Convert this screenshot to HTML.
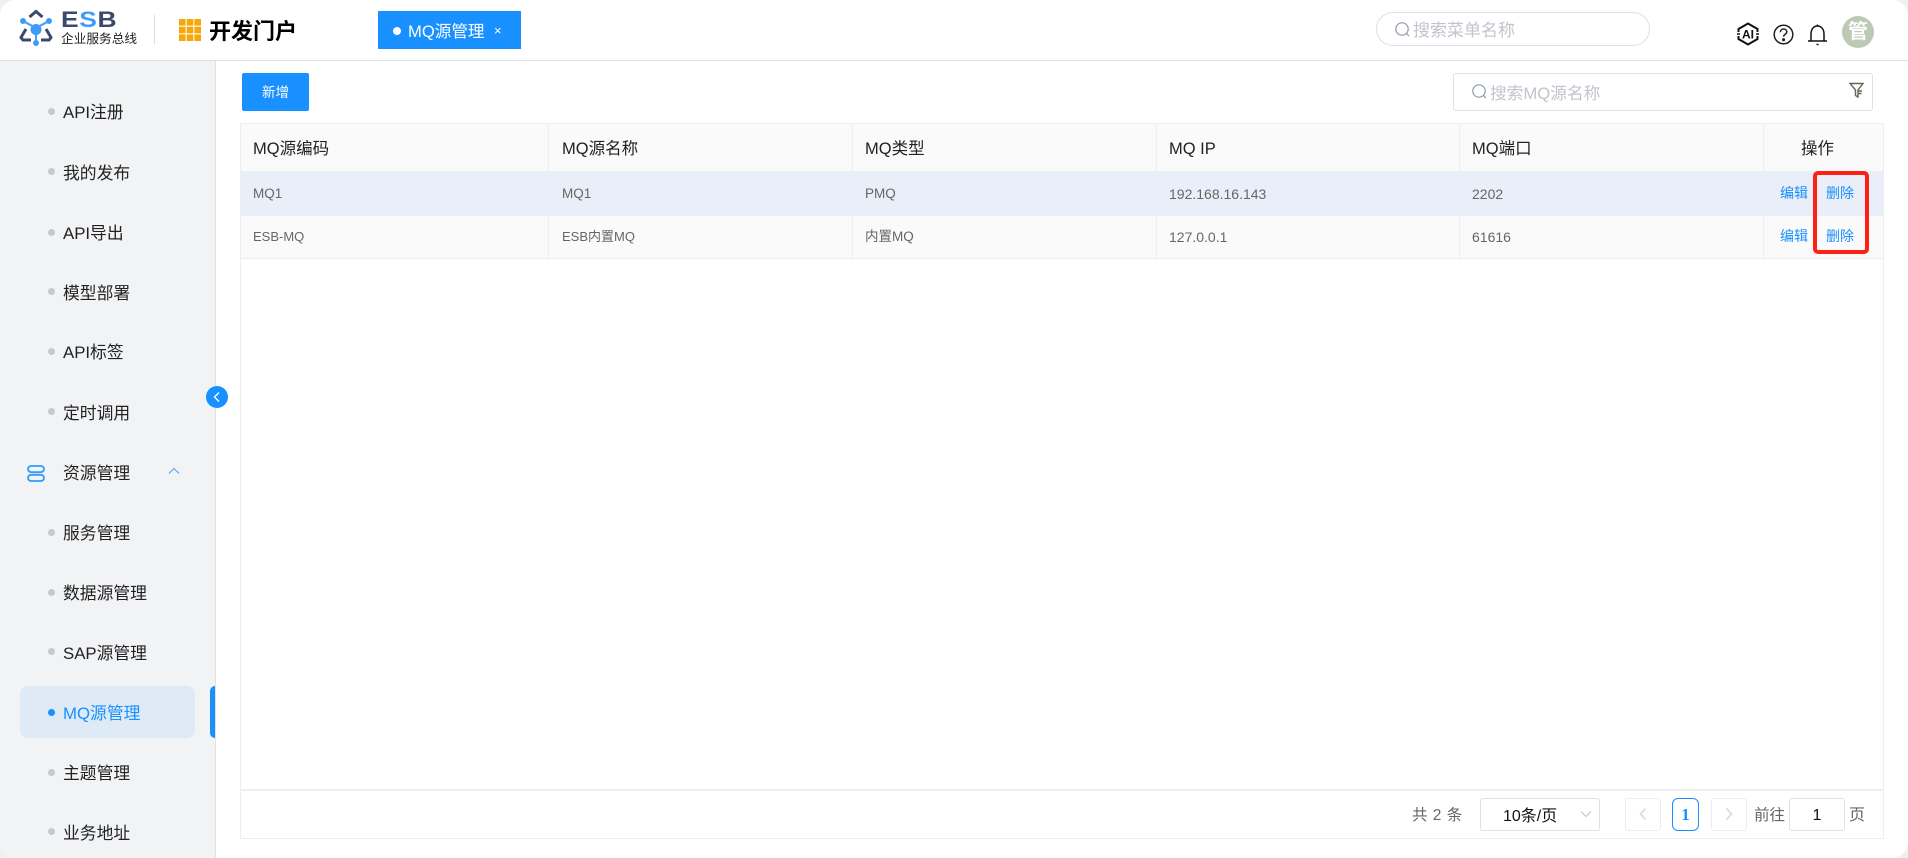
<!DOCTYPE html>
<html lang="zh-CN"><head><meta charset="utf-8"><title>MQ源管理</title>
<style>
*{box-sizing:border-box}
html,body{margin:0;padding:0;width:1908px;height:858px;overflow:hidden;background:#f0f0f0}
body{font-family:"Liberation Sans","Noto Sans CJK SC",sans-serif;color:#222}
#app{position:absolute;left:0;top:0;width:1908px;height:858px;background:#fff;border-radius:16px;overflow:hidden}
.a{position:absolute;white-space:nowrap}
.head{left:0;top:0;width:1908px;height:61px;background:#fff;border-bottom:1px solid #dfdfdf}
.side{left:0;top:61px;width:216px;height:797px;background:#f2f3f5;border-right:1px solid #e2e2e2}
.mi{font-size:16.8px;line-height:24px;color:#222;left:63px;margin-top:1px}
.dot{left:48px;width:7px;height:7px;border-radius:50%;background:#c8c8c8}
.th{font-size:16.5px;line-height:24px;color:#222;top:137px}
.td{font-size:13.5px;line-height:20px;color:#666}
.n{font-size:14px}
.lk{font-size:14px;line-height:18px;color:#1890ff}
.vl{width:1px;background:#eceef4}
.box{border:1px solid #dfe1e6;border-radius:3px;background:#fff}
</style></head><body>
<div id="app">
<div class="a head"></div>

<!-- logo -->
<svg class="a" style="left:18px;top:9px" width="40" height="40" viewBox="0 0 40 40" fill="none">
<path d="M11.5 8 L18 2.5 L24.5 8" stroke="#3a4a6b" stroke-width="3"/>
<path d="M8 20 L3 28.5 L5 31 H13" stroke="#3a4a6b" stroke-width="3"/>
<path d="M28 20 L33 28.5 L31 31 H23" stroke="#3a4a6b" stroke-width="3"/>
<path d="M5 12 L18 19 L31 12 M18 19 V34" stroke="#4aa3f5" stroke-width="2.2"/>
<circle cx="5" cy="12" r="3" fill="#3f9cf6"/><circle cx="31" cy="12" r="3" fill="#3f9cf6"/>
<circle cx="18" cy="34" r="3" fill="#3f9cf6"/><circle cx="18" cy="20.5" r="5.5" fill="#3f9cf6"/>
</svg>
<div class="a" style="left:61px;top:7px;font-size:22px;line-height:26px;font-weight:bold;color:#3a4a6b;letter-spacing:.5px;transform:scaleX(1.2);transform-origin:0 50%">E<span style="color:#3f9cf6">S</span>B</div>
<div class="a" style="left:61px;top:31px;font-size:12.7px;line-height:16px;color:#222">企业服务总线</div>
<div class="a" style="left:154px;top:15px;width:1px;height:29px;background:#dcdcdc"></div>
<svg class="a" style="left:179px;top:19px" width="22" height="22" viewBox="0 0 22 22" fill="#f5a80a">
<rect x="0" y="0" width="6.6" height="6.6"/><rect x="7.7" y="0" width="6.6" height="6.6"/><rect x="15.4" y="0" width="6.6" height="6.6"/>
<rect x="0" y="7.7" width="6.6" height="6.6"/><rect x="7.7" y="7.7" width="6.6" height="6.6"/><rect x="15.4" y="7.7" width="6.6" height="6.6"/>
<rect x="0" y="15.4" width="6.6" height="6.6"/><rect x="7.7" y="15.4" width="6.6" height="6.6"/><rect x="15.4" y="15.4" width="6.6" height="6.6"/>
</svg>
<div class="a" style="left:209px;top:17px;font-size:22px;line-height:30px;font-weight:bold;color:#000">开发门户</div>

<!-- tab -->
<div class="a" style="left:378px;top:11px;width:143px;height:38px;background:#1890ff"></div>
<div class="a" style="left:393px;top:27px;width:8px;height:8px;border-radius:50%;background:#fff"></div>
<div class="a" style="left:408px;top:20px;font-size:16.6px;line-height:24px;color:#fff">MQ源管理</div>
<div class="a" style="left:494px;top:21px;font-size:13px;line-height:20px;color:#fff">×</div>

<!-- top search -->
<div class="a" style="left:1376px;top:12px;width:274px;height:34px;border:1px solid #dcdfe6;border-radius:17px;background:#fff"></div>
<svg class="a" style="left:1394px;top:21px" width="17" height="17" viewBox="0 0 17 17" fill="none" stroke="#8f98a8" stroke-width="1.2"><circle cx="8" cy="8" r="6.2"/><path d="M12.5 12.5 L15 15"/></svg>
<div class="a" style="left:1413px;top:19px;font-size:17px;line-height:24px;color:#c0c4cc">搜索菜单名称</div>

<!-- header icons -->
<svg class="a" style="left:1737px;top:22px" width="22" height="24" viewBox="0 0 22 24" fill="none" stroke="#111" stroke-width="2"><path d="M1.5 10 V7 L11 1.5 L20.5 7 V10 M1.5 14 V17 L11 22.5 L20.5 17 V14"/><path d="M0 12 H3 M19 12 H22" stroke-width="1.4"/><text x="11" y="16.5" text-anchor="middle" font-family="Liberation Sans" font-weight="bold" font-size="12" fill="#111" stroke="none">AI</text></svg>
<svg class="a" style="left:1773px;top:24px" width="22" height="22" viewBox="0 0 22 22" fill="none" stroke="#222" stroke-width="1.5"><circle cx="10.5" cy="10.5" r="9.3"/><path d="M7.4 8.2 C7.4 6 9 5 10.6 5 C12.4 5 13.8 6.2 13.8 7.9 C13.8 10.2 10.6 10.2 10.6 12.8"/><circle cx="10.6" cy="15.7" r=".8" fill="#222"/></svg>
<svg class="a" style="left:1808px;top:24px" width="20" height="22" viewBox="0 0 20 22" fill="none" stroke="#111" stroke-width="1.5"><path d="M0 17 H19"/><path d="M3 17 V10 C3 5.5 5.5 2 9.5 2 C13.5 2 16 5.5 16 10 V17"/><path d="M9.5 0.5 V2" /><path d="M8.5 20.5 H10.5" stroke-width="1.6"/></svg>
<div class="a" style="left:1842px;top:16px;width:32px;height:32px;border-radius:50%;background:#bccab5;color:#fff;font-size:20px;line-height:32px;text-align:center;font-weight:bold">管</div>

<!-- sidebar -->
<div class="a side"></div>
<div class="a dot" style="top:108px"></div><div class="a mi" style="top:100px">API注册</div>
<div class="a dot" style="top:168px"></div><div class="a mi" style="top:161px">我的发布</div>
<div class="a dot" style="top:229px"></div><div class="a mi" style="top:221px">API导出</div>
<div class="a dot" style="top:288px"></div><div class="a mi" style="top:281px">模型部署</div>
<div class="a dot" style="top:348px"></div><div class="a mi" style="top:340px">API标签</div>
<div class="a dot" style="top:408px"></div><div class="a mi" style="top:401px">定时调用</div>
<svg class="a" style="left:27px;top:465px" width="18" height="17" viewBox="0 0 18 17" fill="none" stroke="#2f9bff" stroke-width="1.8"><rect x="1" y="1" width="16" height="6.2" rx="3.1"/><rect x="1" y="9.8" width="16" height="6.2" rx="3.1"/></svg>
<div class="a mi" style="top:461px">资源管理</div>
<svg class="a" style="left:168px;top:467px" width="12" height="8" viewBox="0 0 12 8" fill="none" stroke="#4aa3f5" stroke-width="1"><path d="M1 6.5 L6 1.5 L11 6.5"/></svg>
<div class="a dot" style="top:529px"></div><div class="a mi" style="top:521px">服务管理</div>
<div class="a dot" style="top:589px"></div><div class="a mi" style="top:581px">数据源管理</div>
<div class="a dot" style="top:648px"></div><div class="a mi" style="top:641px">SAP源管理</div>
<div class="a" style="left:20px;top:686px;width:175px;height:52px;background:#deeaf6;border-radius:8px"></div>
<div class="a" style="left:210px;top:686px;width:5px;height:52px;background:#1890ff;border-radius:5px 0 0 5px"></div>
<div class="a dot" style="top:709px;background:#1890ff"></div><div class="a mi" style="top:701px;color:#1890ff">MQ源管理</div>
<div class="a dot" style="top:769px"></div><div class="a mi" style="top:761px">主题管理</div>
<div class="a dot" style="top:828px"></div><div class="a mi" style="top:821px">业务地址</div>
<div class="a" style="left:206px;top:386px;width:22px;height:22px;border-radius:50%;background:#1890ff"></div>
<svg class="a" style="left:206px;top:386px" width="22" height="22" viewBox="0 0 22 22" fill="none" stroke="#fff" stroke-width="1.4"><path d="M13 6.5 L8.5 11 L13 15.5"/></svg>

<!-- toolbar -->
<div class="a" style="left:242px;top:73px;width:67px;height:38px;background:#1890ff;border-radius:2px;color:#fff;font-size:13.5px;line-height:39px;text-align:center">新增</div>
<div class="a box" style="left:1453px;top:73px;width:420px;height:38px"></div>
<svg class="a" style="left:1471px;top:83px" width="17" height="17" viewBox="0 0 17 17" fill="none" stroke="#8f98a8" stroke-width="1.2"><circle cx="8" cy="8" r="6.2"/><path d="M12.5 12.5 L15 15"/></svg>
<div class="a" style="left:1490px;top:82px;font-size:16.7px;line-height:24px;color:#c0c4cc">搜索MQ源名称</div>
<svg class="a" style="left:1849px;top:82px" width="15" height="17" viewBox="0 0 15 17" fill="none" stroke="#6a6257" stroke-width="1.4"><path d="M1 1.5 H14 L9 8 V15 L6.5 13.5 V8 Z"/><path d="M9.5 9 H13 M9.5 11.5 H12.5"/></svg>

<!-- table -->
<div class="a" style="left:240px;top:123px;width:1644px;height:716px;border:1px solid #eceef4;background:#fff"></div>
<div class="a" style="left:241px;top:124px;width:1642px;height:47px;background:#fafafa"></div>
<div class="a" style="left:241px;top:171px;width:1642px;height:45px;background:#e9eef8"></div>
<div class="a" style="left:241px;top:216px;width:1642px;height:42px;background:#fafafa"></div>
<div class="a" style="left:241px;top:258px;width:1642px;height:1px;background:#eceef4"></div>
<div class="a vl" style="left:548px;top:124px;height:47px"></div><div class="a vl" style="left:548px;top:216px;height:42px"></div>
<div class="a vl" style="left:852px;top:124px;height:47px"></div><div class="a vl" style="left:852px;top:216px;height:42px"></div>
<div class="a vl" style="left:1156px;top:124px;height:47px"></div><div class="a vl" style="left:1156px;top:216px;height:42px"></div>
<div class="a vl" style="left:1459px;top:124px;height:47px"></div><div class="a vl" style="left:1459px;top:216px;height:42px"></div>
<div class="a vl" style="left:1763px;top:124px;height:47px"></div><div class="a vl" style="left:1763px;top:216px;height:42px"></div>

<div class="a th" style="left:253px">MQ源编码</div>
<div class="a th" style="left:562px">MQ源名称</div>
<div class="a th" style="left:865px">MQ类型</div>
<div class="a th" style="left:1169px">MQ IP</div>
<div class="a th" style="left:1472px">MQ端口</div>
<div class="a th" style="left:1801px">操作</div>

<div class="a td" style="left:253px;top:184px">MQ1</div>
<div class="a td" style="left:562px;top:184px">MQ1</div>
<div class="a td" style="left:865px;top:184px">PMQ</div>
<div class="a td n" style="left:1169px;top:184px">192.168.16.143</div>
<div class="a td n" style="left:1472px;top:184px">2202</div>
<div class="a lk" style="left:1780px;top:184px">编辑</div>
<div class="a lk" style="left:1826px;top:184px">删除</div>

<div class="a td" style="left:253px;top:227px;font-size:13px">ESB-MQ</div>
<div class="a td" style="left:562px;top:227px;font-size:13px">ESB内置MQ</div>
<div class="a td" style="left:865px;top:227px">内置MQ</div>
<div class="a td n" style="left:1169px;top:227px">127.0.0.1</div>
<div class="a td n" style="left:1472px;top:227px">61616</div>
<div class="a lk" style="left:1780px;top:227px">编辑</div>
<div class="a lk" style="left:1826px;top:227px">删除</div>

<div class="a" style="left:1813px;top:171px;width:56px;height:83px;border:4px solid #ff2015;border-radius:5px"></div>

<!-- footer -->
<div class="a" style="left:241px;top:789px;width:1642px;height:2px;background:#eceef4"></div>
<div class="a" style="left:1412px;top:805px;font-size:15.5px;line-height:22px;color:#666;word-spacing:1px">共 2 条</div>
<div class="a box" style="left:1480px;top:798px;width:120px;height:33px"></div>
<div class="a" style="left:1503px;top:805px;font-size:16px;line-height:24px;color:#111">10条/页</div>
<svg class="a" style="left:1580px;top:810px" width="12" height="8" viewBox="0 0 12 8" fill="none" stroke="#c0c4cc" stroke-width="1.1"><path d="M1 1.5 L6 6.5 L11 1.5"/></svg>
<div class="a box" style="left:1625px;top:798px;width:36px;height:33px;border-color:#ebedf2"></div>
<svg class="a" style="left:1638px;top:807px" width="10" height="14" viewBox="0 0 10 14" fill="none" stroke="#d8dde6" stroke-width="1.8"><path d="M7.5 1.5 L2.5 7 L7.5 12.5"/></svg>
<div class="a" style="left:1672px;top:798px;width:27px;height:33px;border:1px solid #1890ff;border-radius:6px;color:#1890ff;font:bold 17px/31px 'Liberation Serif',serif;text-align:center">1</div>
<div class="a box" style="left:1711px;top:798px;width:36px;height:33px;border-color:#ebedf2"></div>
<svg class="a" style="left:1724px;top:807px" width="10" height="14" viewBox="0 0 10 14" fill="none" stroke="#d8dde6" stroke-width="1.8"><path d="M2.5 1.5 L7.5 7 L2.5 12.5"/></svg>
<div class="a" style="left:1754px;top:805px;font-size:15.5px;line-height:22px;color:#666">前往</div>
<div class="a box" style="left:1789px;top:798px;width:56px;height:33px;color:#111;font-size:16px;line-height:33px;text-align:center">1</div>
<div class="a" style="left:1849px;top:805px;font-size:16px;line-height:22px;color:#666">页</div>
</div>
</body></html>
